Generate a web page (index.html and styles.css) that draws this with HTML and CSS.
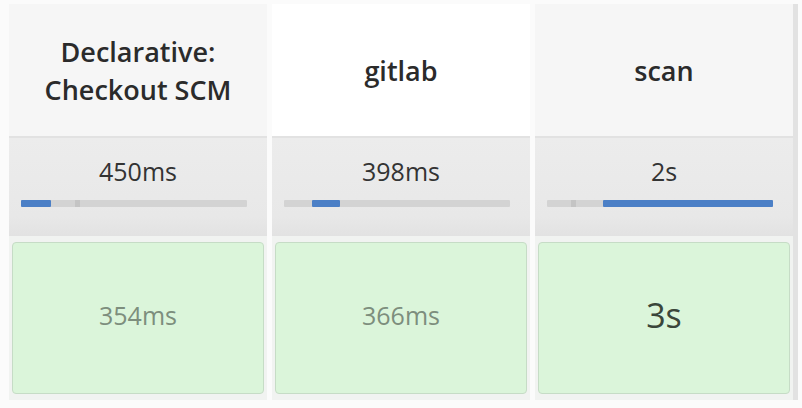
FILE: index.html
```html
<!DOCTYPE html>
<html>
<head>
<meta charset="utf-8">
<link rel="stylesheet" href="styles.css">
</head>
<body>
<div class="stage-view">
  <div class="col">
    <div class="head"><span>Declarative:<br>Checkout SCM</span></div>
    <div class="avg">
      <div class="avg-time">450ms</div>
      <div class="bar"><div class="bar-fill" style="margin-left:0px;width:30px"></div><div class="tick" style="left:54px"></div></div>
    </div>
    <div class="cell"><div class="box"><span class="dur light">354ms</span></div></div>
  </div>
  <div class="col active">
    <div class="head"><span>gitlab</span></div>
    <div class="avg">
      <div class="avg-time">398ms</div>
      <div class="bar"><div class="bar-fill" style="margin-left:28px;width:28px"></div></div>
    </div>
    <div class="cell"><div class="box"><span class="dur light">366ms</span></div></div>
  </div>
  <div class="col">
    <div class="head"><span>scan</span></div>
    <div class="avg">
      <div class="avg-time">2s</div>
      <div class="bar"><div class="bar-fill" style="margin-left:56px;width:170px"></div><div class="tick" style="left:24px"></div></div>
    </div>
    <div class="cell"><div class="box"><span class="dur big">3s</span></div></div>
  </div>
</div>
</body>
</html>
```

FILE: styles.css
```css
html, body {
  margin: 0;
  padding: 0;
  background: #fbfbfb;
}
body {
  font-family: "Open Sans", "Noto Sans", sans-serif;
  color: #333;
  padding: 4px 12px 0 9px;
}
.stage-view {
  display: flex;
  gap: 5px;
  border-right: 5px solid #e2e2e2;
  width: max-content;
}
.col {
  width: 258px;
  display: flex;
  flex-direction: column;
  background: #f2f2f2;
}
.head {
  height: 130px;
  background: #f6f6f6;
  display: flex;
  align-items: center;
  justify-content: center;
  text-align: center;
  font-weight: 600;
  font-size: 27px;
  line-height: 38px;
  color: #2b2b2b;
  border-bottom: 2px solid #e2e2e2;
  padding-top: 2px;
}
.col.active .head {
  background: #ffffff;
}
.avg {
  height: 98px;
  background: linear-gradient(#ececec, #e8e8e8 80%, #e2e2e2);
  display: flex;
  flex-direction: column;
  align-items: center;
  padding-top: 17px;
  box-sizing: border-box;
}
.avg-time {
  font-size: 25px;
  line-height: 32px;
  color: #333;
}
.bar {
  position: relative;
  margin-top: 13px;
  margin-right: 8px;
  width: 226px;
  height: 7px;
  background: #d3d3d3;
  border-radius: 1px;
  display: flex;
}
.bar-fill {
  height: 7px;
  background: #4b7fc6;
  border-radius: 1px;
}
.tick {
  position: absolute;
  top: 0;
  width: 5px;
  height: 7px;
  background: #c4c4c4;
}
.cell {
  padding: 6px 3px 6px 3px;
  background: #f1f3f1;
}
.box {
  height: 152px;
  box-sizing: border-box;
  padding-bottom: 6px;
  background: #dbf5da;
  border: 1px solid #c6dcc6;
  border-radius: 4px;
  display: flex;
  align-items: center;
  justify-content: center;
}
.dur {
  line-height: 1;
}
.dur.light {
  font-size: 25px;
  color: #7d8e7d;
}
.dur.big {
  font-size: 34px;
  color: #3a463a;
}
```
